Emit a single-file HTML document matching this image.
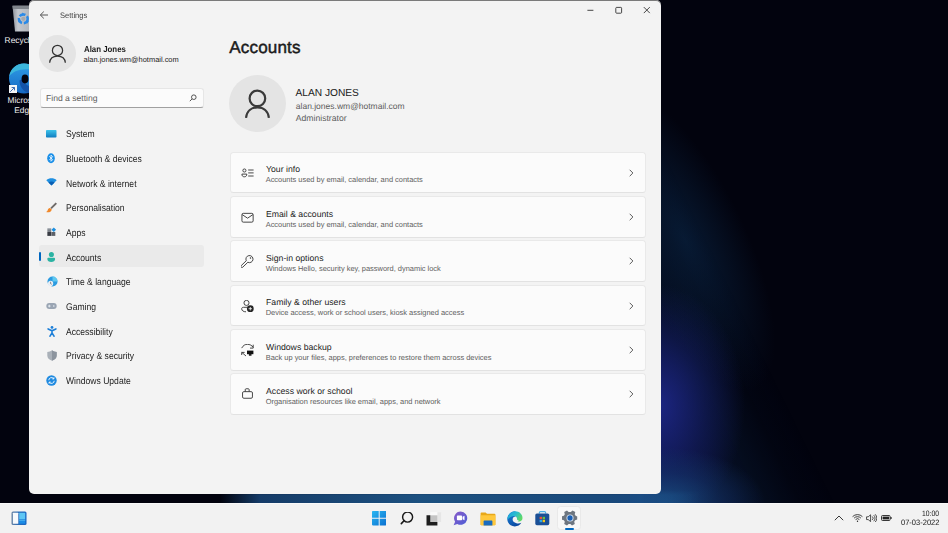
<!DOCTYPE html>
<html><head><meta charset="utf-8">
<style>
*{margin:0;padding:0;box-sizing:border-box}
html,body{width:948px;height:533px;overflow:hidden;background:#02030e;font-family:"Liberation Sans",sans-serif;text-rendering:geometricPrecision}
#wall{position:absolute;left:0;top:0;width:948px;height:503px;background:#02030e;overflow:hidden}
#win{position:absolute;left:29px;top:0px;width:632px;height:494px;background:#f3f3f3;border-radius:5px;box-shadow:inset 0 1px 0 #7a7a7a;overflow:hidden}
.t{position:absolute;white-space:nowrap;line-height:1}
#taskbar{position:absolute;left:0;top:503px;width:948px;height:30px;background:#f2f2f2;box-shadow:inset 0 1px 0 #f9f9f9}
.nav{position:absolute;left:37.2px;font-size:9.7px;color:#1b1b1b;white-space:nowrap;line-height:1;transform:scaleX(0.885);transform-origin:0 0}
.ni{position:absolute;left:17px}
.card{position:absolute;left:200.5px;width:416px;height:41.7px;background:#fbfbfb;border:1px solid #e9e9e9;border-bottom-color:#e2e2e2;border-radius:3.5px}
.ct{position:absolute;left:35.5px;top:12.6px;font-size:8.7px;color:#1b1b1b;white-space:nowrap;line-height:1}
.cs{position:absolute;left:35.2px;top:23.8px;font-size:7.45px;color:#5d5d5d;white-space:nowrap;line-height:1}
.ci{position:absolute;left:10px;top:14px;width:14px;height:14px}
.chev{position:absolute;left:397px;top:16px;width:8px;height:10px}
</style></head><body>
<div id="wall">
  <div style="position:absolute;left:640px;top:0;width:308px;height:503px;background:linear-gradient(64deg, rgba(20,30,100,0.65) 0px, rgba(16,30,85,0.5) 55px, rgba(10,32,64,0.36) 105px, rgba(6,18,40,0.15) 145px, rgba(0,0,0,0) 175px);-webkit-mask-image:linear-gradient(to bottom, rgba(0,0,0,0) 50px, rgba(0,0,0,0.95) 125px, black 300px);mask-image:linear-gradient(to bottom, rgba(0,0,0,0) 50px, rgba(0,0,0,0.95) 125px, black 300px)"></div>
  <div style="position:absolute;left:585px;top:70px;width:200px;height:340px;background:radial-gradient(ellipse 60px 165px at 100px 170px, rgba(12,44,80,0.55), rgba(10,34,64,0.3) 60%, rgba(0,0,0,0) 100%);transform:rotate(-26deg)"></div>
  <div style="position:absolute;left:610px;top:280px;width:200px;height:223px;background:radial-gradient(ellipse 85px 120px at 50px 125px, rgba(34,44,155,0.75), rgba(26,36,125,0.42) 55%, rgba(0,0,0,0) 100%)"></div>
  <div style="position:absolute;left:630px;top:400px;width:185px;height:103px;background:radial-gradient(ellipse 100px 55px at 35px 103px, rgba(26,78,130,0.9), rgba(22,60,115,0.45) 55%, rgba(0,0,0,0) 100%)"></div>
  <div style="position:absolute;left:220px;top:490px;width:480px;height:13px;background:linear-gradient(90deg, rgba(0,0,0,0) 0px, rgba(25,70,120,0.85) 40px, rgba(30,85,135,0.95) 200px, rgba(28,80,135,0.9) 420px, rgba(26,75,130,0) 480px);-webkit-mask-image:linear-gradient(to bottom, transparent 0px, black 5px);mask-image:linear-gradient(to bottom, transparent 0px, black 5px)"></div>
  <!-- desktop icons -->
  <svg style="position:absolute;left:11.5px;top:4.5px" width="19" height="27" viewBox="0 0 19 27"><defs><linearGradient id="rb" x1="0" y1="0" x2="1" y2="0"><stop offset="0" stop-color="#8e939b"/><stop offset="0.3" stop-color="#c4c8ce"/><stop offset="1" stop-color="#b0b4ba"/></linearGradient></defs><path d="M0.5 0.8h18v25.8H3z" fill="url(#rb)"/><path d="M0.5 0.8h18v3.2H0.9z" fill="#80858c"/><g transform="translate(11.3 13.8)"><circle r="4.4" fill="none" stroke="#2a8ae8" stroke-width="2.5" stroke-dasharray="6.2 1.9"/><path d="M-1.2 -6.2l2.8 1.6-2.8 1.8z" fill="#2a8ae8"/><path d="M5.6 2.4l-1.8 2.6-1.2-3z" fill="#2a8ae8"/><path d="M-5 3.4l0.6-3.2 2.4 2.2z" fill="#2a8ae8"/><circle r="2.1" fill="#a4a9b0"/></g></svg>
  <div style="position:absolute;left:4.6px;top:35.8px;font-size:8.4px;color:#f0f0f0;line-height:1;white-space:nowrap">Recycle Bin</div>
  <svg style="position:absolute;left:8px;top:63px" width="32" height="32" viewBox="0 0 32 32"><defs><linearGradient id="eg" x1="0" y1="0" x2="0" y2="1"><stop offset="0" stop-color="#2f9ee6"/><stop offset="1" stop-color="#1668c4"/></linearGradient></defs><circle cx="16" cy="15.6" r="15" fill="url(#eg)"/><path d="M1.2 13.5C2.6 5.6 8.6 0.6 16 0.6c7.2 0 13.2 4.6 14.8 11-3-3.8-7.6-5.4-12.6-5.4-8.2 0-14.6 3.2-17 7.3z" fill="#3cb6dc"/><path d="M11.5 17.5c0 6.2 4.2 12.4 11.5 12.8 3.4-1.6 6.2-4.4 7.6-8-3 2-6 2.2-8.6 1.2-4.2-1.4-6.4-4.2-7-7.6z" fill="#1453a8"/><ellipse cx="17" cy="16" rx="3.4" ry="4.4" fill="#02030e"/></svg>
  <div style="position:absolute;left:8.6px;top:85px;width:8.4px;height:8.4px;background:#f4f6f8"></div>
  <svg style="position:absolute;left:9.4px;top:85.8px" width="7" height="7" viewBox="0 0 7 7"><path d="M1.2 5.8L5.4 1.6M2.6 1.5h2.9v2.9" fill="none" stroke="#2a5ea8" stroke-width="0.9"/></svg>
  <div style="position:absolute;left:7.5px;top:95.8px;font-size:8.3px;color:#f0f0f0;line-height:1;white-space:nowrap">Microsoft</div>
  <div style="position:absolute;left:14.3px;top:105.6px;font-size:8.3px;color:#f0f0f0;line-height:1;white-space:nowrap">Edge</div>
</div>
<div id="win">
  <!-- title bar -->
  <svg style="position:absolute;left:10px;top:10.1px" width="10" height="10" viewBox="0 0 10 10"><path d="M9 5H1.5M4.8 1.6L1.3 5l3.5 3.4" fill="none" stroke="#444" stroke-width="0.9"/></svg>
  <div class="t" style="left:31px;top:12.4px;font-size:7.95px;color:#444;transform:scaleX(0.95);transform-origin:0 0">Settings</div>
  <svg style="position:absolute;left:557px;top:5px" width="70" height="12" viewBox="0 0 70 12"><path d="M1.4 5.3h6" stroke="#333" stroke-width="0.9"/><rect x="29.8" y="2.4" width="5.8" height="5.8" rx="0.8" fill="none" stroke="#333" stroke-width="0.9"/><path d="M57.8 2.1l6 6M63.8 2.1l-6 6" stroke="#333" stroke-width="0.9"/></svg>

  <!-- sidebar profile -->
  <div style="position:absolute;left:10px;top:34.8px;width:37px;height:37px;border-radius:50%;background:#e4e4e4"></div>
  <svg style="position:absolute;left:18px;top:43.5px" width="21" height="21" viewBox="0 0 21 21"><circle cx="10.5" cy="6.4" r="5.1" fill="none" stroke="#333" stroke-width="1.25"/><path d="M2.65 18.7C3 14.5 6.3 12.1 10.5 12.1S18 14.5 18.35 18.7" fill="none" stroke="#333" stroke-width="1.25"/></svg>
  <div class="t" style="left:54.5px;top:45.2px;font-size:8.6px;font-weight:700;color:#1b1b1b;transform:scaleX(0.913);transform-origin:0 0">Alan Jones</div>
  <div class="t" style="left:54.5px;top:55.9px;font-size:7.45px;color:#1b1b1b">alan.jones.wm@hotmail.com</div>

  <!-- search -->
  <div style="position:absolute;left:10.6px;top:88.2px;width:164.6px;height:19.6px;background:#fbfbfb;border:1px solid #e6e6e6;border-bottom:1px solid #a0a0a0;border-radius:3px"></div>
  <div class="t" style="left:17px;top:93.5px;font-size:8.6px;color:#5d5d5d">Find a setting</div>
  <svg style="position:absolute;left:160px;top:94px" width="8" height="8" viewBox="0 0 8 8"><circle cx="4.8" cy="3.2" r="2.3" fill="none" stroke="#444" stroke-width="0.9"/><path d="M3.1 4.9L0.8 7.2" stroke="#444" stroke-width="0.9"/></svg>

  <!-- nav -->
  <div style="position:absolute;left:10px;top:245.4px;width:165px;height:21.5px;background:#eaeaea;border-radius:3px"></div>
  <div style="position:absolute;left:10px;top:252px;width:2.2px;height:9px;background:#0067c0;border-radius:1px"></div>

  <svg class="ni" style="top:129.5px" width="11" height="8" viewBox="0 0 11 8"><defs><linearGradient id="gs" x1="0" y1="0" x2="0" y2="1"><stop offset="0" stop-color="#3cc3ea"/><stop offset="1" stop-color="#0f7cc0"/></linearGradient></defs><rect x="0" y="0" width="10.5" height="7.5" rx="0.8" fill="url(#gs)"/></svg>
  <div class="nav" style="top:130.15px">System</div>

  <svg class="ni" style="top:152.5px;left:18px" width="9" height="11" viewBox="0 0 9 11"><ellipse cx="4" cy="5.2" rx="3.8" ry="5" fill="#1a8fe8"/><path d="M2.3 3.3l3.3 3.4-1.6 1.6V2.1l1.6 1.6-3.3 3.4" fill="none" stroke="#fff" stroke-width="0.8"/></svg>
  <div class="nav" style="top:154.85px">Bluetooth &amp; devices</div>

  <svg class="ni" style="top:178.2px" width="11" height="8" viewBox="0 0 11 8"><path d="M0.3 2.2C1.8 0.9 3.6 0.3 5.5 0.3s3.7 0.6 5.2 1.9L5.5 7.6z" fill="#1f8fe0"/><path d="M2.4 4.4C3.3 3.7 4.3 3.4 5.5 3.4s2.2 0.3 3.1 1L5.5 7.6z" fill="#0b5fb3"/></svg>
  <div class="nav" style="top:179.55px">Network &amp; internet</div>

  <svg class="ni" style="top:202px;left:17px" width="11" height="11" viewBox="0 0 11 11"><path d="M9.6 0.4L4.4 5.8l1.3 1.3L11 1.8z" fill="#6e6a68"/><path d="M4 6.1c-1.8 0.2-2 1.6-2.5 2.6-0.3 0.6-0.9 1.1-1.4 1.3 2.2 0.6 5.2 0.2 5.7-2.6z" fill="#f0882a"/></svg>
  <div class="nav" style="top:204.25px">Personalisation</div>

  <svg class="ni" style="top:226.8px;left:17.8px" width="10" height="10" viewBox="0 0 10 10"><defs><linearGradient id="ap" x1="0" y1="0" x2="0" y2="1"><stop offset="0" stop-color="#9aa0a8"/><stop offset="1" stop-color="#6a7078"/></linearGradient></defs><rect x="0.35" y="1.25" width="3.9" height="3.6" fill="url(#ap)"/><rect x="0.35" y="5" width="3.9" height="3.9" fill="#383b43"/><rect x="4.4" y="5" width="3.9" height="3.9" fill="#5c6068"/><path d="M6.8 0.45L9.1 2.75 6.8 5.05 4.5 2.75z" fill="#1c8fe0"/></svg>
  <div class="nav" style="top:228.95px">Apps</div>

  <svg class="ni" style="top:250.6px;left:18px" width="9" height="12" viewBox="0 0 9 12"><circle cx="4.4" cy="3.5" r="2.55" fill="#2bb3a3"/><path d="M0.3 7.9c0-0.7 0.5-1.2 1.2-1.2h5.4c0.7 0 1.2 0.5 1.2 1.2 0 1.8-1.7 3-3.9 3S0.3 9.7 0.3 7.9z" fill="#2bb3a3"/></svg>
  <div class="nav" style="top:253.65px">Accounts</div>

  <svg class="ni" style="top:275.8px;left:17.8px" width="11" height="11" viewBox="0 0 11 11"><circle cx="5.5" cy="5.5" r="5" fill="#2b9be0"/><path d="M5.5 0.5a5 5 0 0 1 5 5h-5z" fill="#5ec8f0"/><circle cx="3.6" cy="7.4" r="2.6" fill="#e8eef4"/><path d="M3.6 5.8v1.8l1.1 0.7" fill="none" stroke="#445" stroke-width="0.6"/></svg>
  <div class="nav" style="top:278.35px">Time &amp; language</div>

  <svg class="ni" style="top:302px;left:17px" width="11" height="8" viewBox="0 0 11 8"><rect x="0.3" y="1" width="10.4" height="6" rx="3" fill="#9aa5b3"/><rect x="2" y="3.6" width="2.6" height="0.9" fill="#e8eef4"/><rect x="2.85" y="2.75" width="0.9" height="2.6" fill="#e8eef4"/><circle cx="7.8" cy="4" r="0.8" fill="#e8eef4"/></svg>
  <div class="nav" style="top:303.05px">Gaming</div>

  <svg class="ni" style="top:325.5px;left:17.6px" width="10" height="11" viewBox="0 0 10 11"><circle cx="5" cy="1.45" r="1.4" fill="#1d7fd8"/><path d="M1.1 2.9L5 4.7 8.9 2.9M5 4.7v2.1M5 6.8L3 10.2M5 6.8l2 3.4" fill="none" stroke="#1d7fd8" stroke-width="1.6" stroke-linecap="round" stroke-linejoin="round"/></svg>
  <div class="nav" style="top:327.75px">Accessibility</div>

  <svg class="ni" style="top:350px;left:17.5px" width="10" height="11" viewBox="0 0 10 11"><path d="M5 0.3C3.6 1.4 2 1.9 0.3 1.9v3.6c0 2.6 1.8 4.3 4.7 5.2 2.9-0.9 4.7-2.6 4.7-5.2V1.9C8 1.9 6.4 1.4 5 0.3z" fill="#a9b0b8"/><path d="M5 0.3C6.4 1.4 8 1.9 9.7 1.9v3.6c0 2.6-1.8 4.3-4.7 5.2z" fill="#8c949e"/></svg>
  <div class="nav" style="top:352.45px">Privacy &amp; security</div>

  <svg class="ni" style="top:375px;left:17px" width="11" height="11" viewBox="0 0 11 11"><circle cx="5.5" cy="5.5" r="5.2" fill="#1f8ae0"/><path d="M2.8 5.2a2.7 2.7 0 0 1 4.8-1.6M8.2 5.8a2.7 2.7 0 0 1-4.8 1.6" fill="none" stroke="#fff" stroke-width="0.9"/><path d="M7.9 2.3v1.6H6.3M3.1 8.7V7.1h1.6" fill="none" stroke="#fff" stroke-width="0.9"/></svg>
  <div class="nav" style="top:377.15px">Windows Update</div>

  <!-- main -->
  <div class="t" style="left:200.3px;top:38.8px;font-size:17.1px;letter-spacing:0.12px;font-weight:400;color:#1b1b1b;-webkit-text-stroke:0.45px #1b1b1b">Accounts</div>
  <div style="position:absolute;left:200px;top:75.4px;width:57px;height:57px;border-radius:50%;background:#e4e4e4"></div>
  <svg style="position:absolute;left:213px;top:86px" width="31" height="33" viewBox="0 0 31 33"><circle cx="15.4" cy="12.4" r="7.8" fill="none" stroke="#3a3a3a" stroke-width="2.2"/><path d="M4 31.9C4.7 25 9.5 21.4 15.45 21.4S26.2 25 26.9 31.9" fill="none" stroke="#3a3a3a" stroke-width="2.2"/></svg>
  <div class="t" style="left:266.5px;top:88.5px;font-size:10.2px;color:#1b1b1b">ALAN JONES</div>
  <div class="t" style="left:266.8px;top:101.8px;font-size:8.5px;color:#5d5d5d">alan.jones.wm@hotmail.com</div>
  <div class="t" style="left:266.8px;top:113.9px;font-size:8.65px;color:#5d5d5d">Administrator</div>

  <div class="card" style="top:151.6px">
    <svg class="ci" viewBox="0 0 14 14"><circle cx="3.4" cy="3.5" r="1.55" fill="none" stroke="#333" stroke-width="0.9"/><path d="M0.9 7.1H5.8C5.8 9 4.8 9.8 3.35 9.8S0.9 9 0.9 7.1z" fill="none" stroke="#333" stroke-width="0.9" stroke-linejoin="round"/><path d="M7.2 3h5.4M7.2 5.9h5.4M7.2 9h5.4" stroke="#333" stroke-width="0.9"/></svg>
    <div class="ct">Your info</div>
    <div class="cs">Accounts used by email, calendar, and contacts</div>
    <svg class="chev" viewBox="0 0 8 10"><path d="M1.7 0.8L4.9 4L1.7 7.2" fill="none" stroke="#4a4a4a" stroke-width="0.9"/></svg>
  </div>
  <div class="card" style="top:196.0px">
    <svg class="ci" viewBox="0 0 14 14"><rect x="0.95" y="2.35" width="11.2" height="8.8" rx="1.3" fill="none" stroke="#333" stroke-width="0.9"/><path d="M1.2 3.6L6.55 7.2L11.9 3.6" fill="none" stroke="#333" stroke-width="0.9"/></svg>
    <div class="ct">Email &amp; accounts</div>
    <div class="cs">Accounts used by email, calendar, and contacts</div>
    <svg class="chev" viewBox="0 0 8 10"><path d="M1.7 0.8L4.9 4L1.7 7.2" fill="none" stroke="#4a4a4a" stroke-width="0.9"/></svg>
  </div>
  <div class="card" style="top:240.3px">
    <svg class="ci" viewBox="0 0 14 14"><path d="M5.29 5.71L0.22 10.62A1.1 1.1 0 0 0 1.78 12.18L6.84 7.26A3.55 3.55 0 1 0 5.29 5.71Z" fill="none" stroke="#333" stroke-width="0.9" stroke-linejoin="round"/><circle cx="9.5" cy="3" r="0.75" fill="#333"/></svg>
    <div class="ct">Sign-in options</div>
    <div class="cs">Windows Hello, security key, password, dynamic lock</div>
    <svg class="chev" viewBox="0 0 8 10"><path d="M1.7 0.8L4.9 4L1.7 7.2" fill="none" stroke="#4a4a4a" stroke-width="0.9"/></svg>
  </div>
  <div class="card" style="top:284.7px">
    <svg class="ci" viewBox="0 0 14 14"><circle cx="5.5" cy="2.9" r="2.55" fill="none" stroke="#333" stroke-width="0.9"/><path d="M6.2 7.3H2.4C1.3 7.3 0.7 7.9 0.7 8.9C0.7 10.7 2.6 11.8 5 11.8" fill="none" stroke="#333" stroke-width="0.9"/><circle cx="9.3" cy="8.7" r="3.4" fill="#262626"/><path d="M9.3 7v3.4M7.6 8.7h3.4" stroke="#fbfbfb" stroke-width="0.8"/></svg>
    <div class="ct">Family &amp; other users</div>
    <div class="cs">Device access, work or school users, kiosk assigned access</div>
    <svg class="chev" viewBox="0 0 8 10"><path d="M1.7 0.8L4.9 4L1.7 7.2" fill="none" stroke="#4a4a4a" stroke-width="0.9"/></svg>
  </div>
  <div class="card" style="top:329.0px">
    <svg class="ci" viewBox="0 0 14 14"><path d="M0.7 4.1C2.2 1.3 4.2 0.3 6.4 0.3C8.8 0.3 10.8 1.4 12.1 3.2" fill="none" stroke="#333" stroke-width="0.9"/><path d="M12.2 0.7V4.1H9" fill="none" stroke="#333" stroke-width="0.9"/><path d="M5 12L0.8 8.4M0.7 11V8.4H3.6" fill="none" stroke="#333" stroke-width="0.9"/><rect x="6" y="6.6" width="6.4" height="3.6" fill="#111"/><rect x="7.9" y="10.1" width="2.6" height="1.6" fill="#111"/></svg>
    <div class="ct">Windows backup</div>
    <div class="cs">Back up your files, apps, preferences to restore them across devices</div>
    <svg class="chev" viewBox="0 0 8 10"><path d="M1.7 0.8L4.9 4L1.7 7.2" fill="none" stroke="#4a4a4a" stroke-width="0.9"/></svg>
  </div>
  <div class="card" style="top:373.4px">
    <svg class="ci" viewBox="0 0 14 14"><rect x="1.55" y="3.65" width="9.9" height="6.6" rx="1.3" fill="none" stroke="#333" stroke-width="0.9"/><path d="M4.25 3.65V1.6C4.25 1.1 4.6 0.75 5.1 0.75H7.3C7.8 0.75 8.15 1.1 8.15 1.6V3.65" fill="none" stroke="#333" stroke-width="0.9"/></svg>
    <div class="ct">Access work or school</div>
    <div class="cs">Organisation resources like email, apps, and network</div>
    <svg class="chev" viewBox="0 0 8 10"><path d="M1.7 0.8L4.9 4L1.7 7.2" fill="none" stroke="#4a4a4a" stroke-width="0.9"/></svg>
  </div>
</div>
<div id="taskbar">
  <!-- widgets -->
  <svg style="position:absolute;left:10.7px;top:8px" width="16" height="15" viewBox="0 0 16 15"><defs><linearGradient id="wg" x1="0" y1="0" x2="1" y2="0"><stop offset="0" stop-color="#6a84a4"/><stop offset="0.45" stop-color="#2c6cb8"/><stop offset="1" stop-color="#1566c4"/></linearGradient></defs><rect x="0.5" y="0.5" width="15" height="13.5" rx="1.5" fill="url(#wg)"/><rect x="1.9" y="1.8" width="5.4" height="10.9" rx="0.5" fill="#f6f9fc"/><rect x="8.2" y="1.8" width="6" height="6.8" fill="#5ec6f4"/><rect x="8.2" y="8.6" width="6" height="4.1" fill="#1b8ce6"/><rect x="8.2" y="9.3" width="6" height="0.7" fill="#55b8f0"/></svg>
  <!-- start -->
  <svg style="position:absolute;left:371.8px;top:8.4px" width="14.4" height="14.4" viewBox="0 0 14.4 14.4"><defs><linearGradient id="st" x1="0" y1="0" x2="1" y2="1"><stop offset="0" stop-color="#2ab7f2"/><stop offset="1" stop-color="#0a6fd0"/></linearGradient></defs><path d="M0.8 0h5.9v6.7H0V0.8A0.8 0.8 0 0 1 0.8 0zM7.7 0h5.9a0.8 0.8 0 0 1 0.8 0.8v5.9H7.7zM0 7.7h6.7v6.7H0.8A0.8 0.8 0 0 1 0 13.6zM7.7 7.7h6.7v5.9a0.8 0.8 0 0 1-0.8 0.8H7.7z" fill="url(#st)"/></svg>
  <!-- search -->
  <svg style="position:absolute;left:399.5px;top:8.5px" width="14" height="14" viewBox="0 0 14 14"><circle cx="7.6" cy="5.1" r="5" fill="none" stroke="#1a1a1a" stroke-width="1.45"/><path d="M4 8.7L1.3 11.6" stroke="#1a1a1a" stroke-width="1.6" stroke-linecap="round"/></svg>
  <!-- task view -->
  <svg style="position:absolute;left:425.5px;top:8.5px" width="16" height="14" viewBox="0 0 16 14"><rect x="4.3" y="0.2" width="11" height="9.8" fill="#fafafa"/><rect x="11.4" y="0.2" width="3.9" height="9.8" fill="#e6e6e6"/><rect x="4.3" y="3.3" width="7.1" height="6.7" fill="#c4c4c4"/><path d="M0.5 3.3h3.8v6.7h7.1v3.5H0.5z" fill="#1e1e1e"/></svg>
  <!-- chat -->
  <svg style="position:absolute;left:452.8px;top:7.8px" width="15" height="15" viewBox="0 0 15 15"><defs><linearGradient id="ch" x1="0" y1="0" x2="1" y2="1"><stop offset="0" stop-color="#8a5cc8"/><stop offset="1" stop-color="#4b5dd6"/></linearGradient></defs><path d="M7.7 0.6a6.6 6.6 0 1 1-3.4 12.3L0.6 14.2l1.5-3.5A6.6 6.6 0 0 1 7.7 0.6z" fill="url(#ch)"/><rect x="3.9" y="4.6" width="5.2" height="4.6" rx="0.8" fill="#fff"/><path d="M9.6 5.8l1.9-1v4.4l-1.9-1z" fill="#fff"/></svg>
  <!-- explorer -->
  <svg style="position:absolute;left:480px;top:8.5px" width="16" height="14" viewBox="0 0 16 14"><path d="M0.6 1.2c0-0.5 0.3-0.8 0.8-0.8h4.2l1.4 1.4h7.6c0.5 0 0.8 0.3 0.8 0.8V13H0.6z" fill="#e8a81a"/><path d="M0.6 3.2h14.8V12.6c0 0.5-0.3 0.8-0.8 0.8H1.4c-0.5 0-0.8-0.3-0.8-0.8z" fill="#ffc83d"/><path d="M3.6 9.6c0-0.6 0.4-1 1-1h6.8c0.6 0 1 0.4 1 1v3.8H3.6z" fill="#1a6cc0"/></svg>
  <!-- edge -->
  <svg style="position:absolute;left:507px;top:7.9px" width="16" height="16" viewBox="0 0 16 16"><defs><linearGradient id="ed1" x1="0" y1="0" x2="1" y2="0.5"><stop offset="0" stop-color="#1b9be0"/><stop offset="0.55" stop-color="#27bcd0"/><stop offset="1" stop-color="#5fd968"/></linearGradient><linearGradient id="ed2" x1="0" y1="0" x2="0.6" y2="1"><stop offset="0" stop-color="#1a86dc"/><stop offset="1" stop-color="#0b48a0"/></linearGradient></defs><path d="M8.3 0.3C3.9 0.3 0.3 3.9 0.3 8.1 0.3 12.3 3.6 15.4 7.8 15.4c2.9 0 5.2-1.4 6.5-3.6-1.3 0.6-2.8 0.8-4.2 0.6C7.6 12.1 5.6 10.6 5.6 8.6 5.6 6.9 6.9 5.6 8.6 5.6z" fill="url(#ed2)"/><path d="M8.3 0.3c3.9 0 7.2 2.9 7.2 6.6 0 2.1-1.4 3.5-3.4 3.5-1.5 0-2.6-0.6-2.6-1.5 0-0.4 0.4-0.7 0.4-1.4 0-1.4-1.2-2.4-2.7-2.4-2.4 0-4.5 1.3-6.9 3.6C0.5 4 3.9 0.3 8.3 0.3z" fill="url(#ed1)"/><ellipse cx="8" cy="8.3" rx="1.9" ry="1.9" fill="#f2f2f2"/><path d="M8 6.4c1.1 0 1.9 0.8 1.9 1.6 0 0.9 0.9 1.5 2.2 1.5-1 1-2.3 1.4-3.6 1.1z" fill="#f2f2f2"/></svg>
  <!-- store -->
  <svg style="position:absolute;left:534.7px;top:8px" width="15" height="15" viewBox="0 0 15 15"><path d="M4.4 2.6V1.6c0-0.6 0.4-1 1-1h4.2c0.6 0 1 0.4 1 1v1" fill="none" stroke="#4ab0e8" stroke-width="1.2"/><rect x="0.3" y="2.4" width="14" height="11.8" rx="1.6" fill="#1a4f96"/><rect x="4.6" y="5.8" width="2.4" height="2.4" fill="#e8523c"/><rect x="7.6" y="5.8" width="2.4" height="2.4" fill="#6cbf3c"/><rect x="4.6" y="8.8" width="2.4" height="2.4" fill="#2aa8f0"/><rect x="7.6" y="8.8" width="2.4" height="2.4" fill="#f5c518"/></svg>
  <!-- settings -->
  <div style="position:absolute;left:557.4px;top:3.3px;width:24px;height:24.2px;background:#f8f8f8;border:1px solid #e9e9e9;border-radius:3.5px"></div>
  <svg style="position:absolute;left:562.1px;top:6.9px" width="16" height="16" viewBox="-8 -8 16 16"><path transform="rotate(90)" d="M-1.6 -7.2h3.2l0.6 2.1 1.6 0.9 2.1-0.6 1.6 2.8-1.5 1.6v1.8l1.5 1.6-1.6 2.8-2.1-0.6-1.6 0.9-0.6 2.1h-3.2l-0.6-2.1-1.6-0.9-2.1 0.6-1.6-2.8 1.5-1.6V-0.9l-1.5-1.6 1.6-2.8 2.1 0.6 1.6-0.9z" fill="#6e7680"/><circle cx="0" cy="0" r="3.5" fill="#dce8f5"/><circle cx="0" cy="0" r="2.65" fill="#1a5fb4"/></svg>
  <div style="position:absolute;left:564.5px;top:25px;width:9.5px;height:2px;background:#0067c0;border-radius:1px"></div>
  <!-- tray -->
  <svg style="position:absolute;left:834.3px;top:11.6px" width="10" height="6" viewBox="0 0 10 6"><path d="M0.8 5.2L5 1l4.2 4.2" fill="none" stroke="#222" stroke-width="0.9"/></svg>
  <svg style="position:absolute;left:851.5px;top:10.8px" width="11" height="8" viewBox="0 0 11 8"><path d="M0.6 2.6a7 7 0 0 1 9.8 0M2.1 4.1a4.8 4.8 0 0 1 6.8 0M3.6 5.6a2.6 2.6 0 0 1 3.8 0" fill="none" stroke="#222" stroke-width="0.85"/><circle cx="5.5" cy="7.2" r="0.7" fill="#222"/></svg>
  <svg style="position:absolute;left:865.6px;top:10.6px" width="11" height="8.4" viewBox="0 0 12 9"><path d="M0.6 3h1.8L5 0.8v7.4L2.4 6H0.6z" fill="none" stroke="#222" stroke-width="0.85" stroke-linejoin="round"/><path d="M6.8 2.6a2.5 2.5 0 0 1 0 3.8M8.4 1.2a4.5 4.5 0 0 1 0 6.6M10 0.2a6 6 0 0 1 0 8.6" fill="none" stroke="#222" stroke-width="0.85"/></svg>
  <svg style="position:absolute;left:881px;top:12.4px" width="11" height="6" viewBox="0 0 11 6"><rect x="0.5" y="0.5" width="8.6" height="5" rx="1" fill="none" stroke="#222" stroke-width="0.9"/><rect x="1.6" y="1.6" width="6.4" height="2.8" fill="#222"/><rect x="9.4" y="2" width="1.2" height="2" fill="#222"/></svg>
  <div class="t" style="position:absolute;left:922.1px;top:6.6px;font-size:7.8px;color:#1a1a1a;transform:scaleX(0.87);transform-origin:0 0">10:00</div>
  <div class="t" style="position:absolute;left:900.6px;top:16.4px;font-size:7.8px;color:#1a1a1a;transform:scaleX(0.965);transform-origin:0 0">07-03-2022</div>
</div>
</body></html>
